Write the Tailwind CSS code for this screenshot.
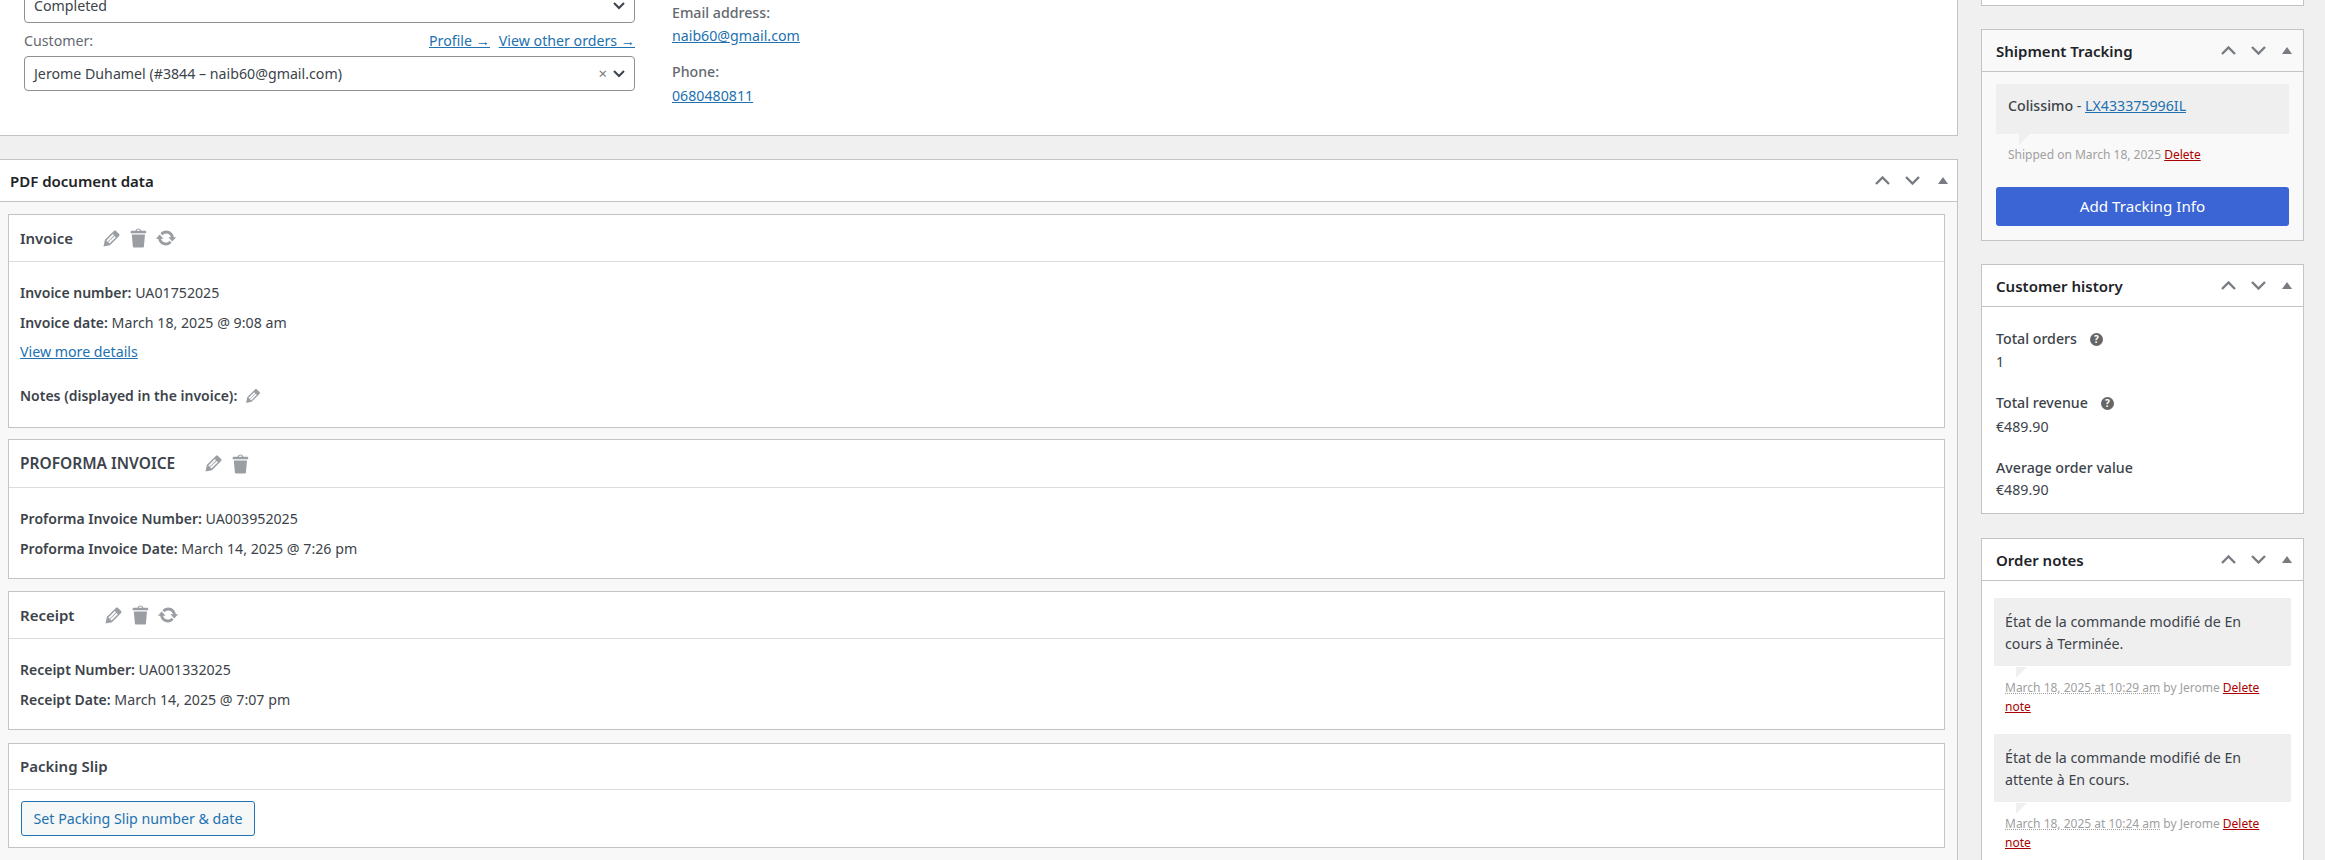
<!DOCTYPE html>
<html lang="en">
<head>
<meta charset="UTF-8">
<title>Edit order</title>
<script src="https://cdn.jsdelivr.net/npm/@tailwindcss/browser@4"></script>
</head>
<body class="bg-[#f0f0f1] h-[860px] overflow-hidden font-['Noto_Sans',sans-serif] text-[14.2px] text-[#3c434a]">
<div class="flex items-start h-[860px] overflow-hidden">

  <!-- Main column -->
  <div class="w-[1958px] shrink-0">
    <!-- Order details -->
    <div class="h-[136px] bg-white border-b border-r border-[#c3c4c7] flex overflow-hidden">
      <div class="w-[611px] ml-[24px] shrink-0 -mt-[12px]">
        <div class="h-[35px] border border-[#8c8f94] rounded-[4px] flex items-center justify-between pl-[9px] pr-[8px] shrink-0">
          <span>Completed</span>
          <svg class="w-[14px] h-[10px]" viewBox="0 0 14 10" fill="none" stroke="#3c434a" stroke-width="2"><path d="M2 2l5 5 5-5"/></svg>
        </div>
        <div class="flex justify-between h-[20px] items-center mt-[8px] text-[#646970]">
          <span>Customer:</span>
          <span class="flex gap-[9px] text-[#2271b1] underline"><a>Profile →</a><a>View other orders →</a></span>
        </div>
        <div class="h-[35px] mt-[5px] border border-[#8c8f94] rounded-[4px] flex items-center justify-between pl-[9px] pr-[8px]">
          <span>Jerome Duhamel (#3844 – naib60@gmail.com)</span>
          <span class="flex items-center gap-[5px]">
            <span class="text-[#777] text-[15px] leading-none">×</span>
            <svg class="w-[14px] h-[10px]" viewBox="0 0 14 10" fill="none" stroke="#3c434a" stroke-width="2"><path d="M2 2l5 5 5-5"/></svg>
          </span>
        </div>
      </div>
      <div class="ml-[37px] pt-[2px] leading-[22px]">
        <div class="text-[#646970] font-medium">Email address:</div>
        <a class="block mt-[1px] text-[#2271b1] underline">naib60@gmail.com</a>
        <div class="mt-[14px] text-[#646970] font-medium">Phone:</div>
        <a class="block mt-[2px] text-[#2271b1] underline">0680480811</a>
      </div>
    </div>

    <!-- PDF document data -->
    <div class="mt-[23px] h-[701px] bg-[#f8f8f8] border-t border-r border-[#c3c4c7]">
      <div class="h-[42px] bg-white border-b border-[#c3c4c7] flex items-center justify-between pl-[10px] pr-[9px]">
        <h2 class="font-semibold text-[15px] text-[#1d2327] pt-[1px]">PDF document data</h2>
        <div class="flex items-center gap-[15px] text-[#787c82]">
          <svg class="w-[15px] h-[9px]" viewBox="0 0 15 9" fill="none" stroke="currentColor" stroke-width="2.4"><path d="M1 8l6.5-6.5L14 8"/></svg>
          <svg class="w-[15px] h-[9px]" viewBox="0 0 15 9" fill="none" stroke="currentColor" stroke-width="2.4"><path d="M1 1l6.5 6.5L14 1"/></svg>
          <svg class="w-[10px] h-[7px] ml-[3px]" viewBox="0 0 10 7" fill="currentColor"><path d="M5 0l5 7H0z"/></svg>
        </div>
      </div>

      <div class="ml-[8px] mr-[12px] mt-[12px]">
        <!-- Invoice -->
        <section class="h-[214px] bg-white border border-[#c3c4c7]">
          <div class="h-[47px] border-b border-[#dcdcde] flex items-center pl-[11px]">
            <h3 class="font-semibold text-[15px]">Invoice</h3>
            <div class="flex items-center ml-[27px] text-[#9a9ea3]">
              <svg class="w-[23px] h-[23px]" viewBox="0 0 20 20" fill="currentColor"><path d="M13.89 3.39l2.71 2.72c.46.46.42 1.24.03 1.64l-8.01 8.02-5.56 1.16 1.16-5.58s7.6-7.63 7.99-8.03c.39-.39 1.22-.39 1.68.07zm-2.73 2.79l-5.59 5.61 1.11 1.11 5.54-5.65zm-2.97 8.23l5.58-5.6-1.07-1.08-5.59 5.6z"/></svg>
              <svg class="w-[24px] h-[24px] ml-[4px]" viewBox="0 0 20 20" fill="currentColor"><path d="M12 4h3c.6 0 1 .4 1 1v1H3V5c0-.6.5-1 1-1h3c.2-1.1 1.3-2 2.5-2s2.3.9 2.5 2zM8 4h3c-.2-.6-.9-1-1.5-1S8.2 3.4 8 4zM4 7h11l-.9 10.1c0 .5-.5.9-1 .9H5.9c-.5 0-.9-.4-1-.9L4 7z"/></svg>
              <svg class="w-[22px] h-[22px] ml-[4px]" viewBox="0 0 20 20" fill="currentColor"><path d="M10.2 3.28c3.53 0 6.43 2.61 6.92 6h2.08l-3.5 4-3.5-4h2.32c-.45-1.97-2.21-3.45-4.32-3.45-1.45 0-2.73.71-3.54 1.78L4.95 5.66C6.23 4.2 8.11 3.28 10.2 3.28zm-.4 13.44c-3.52 0-6.43-2.61-6.92-6H.8l3.5-4c1.17 1.33 2.33 2.67 3.5 4H5.48c.45 1.97 2.21 3.45 4.32 3.45 1.45 0 2.73-.71 3.54-1.78l1.71 1.95c-1.28 1.46-3.15 2.38-5.25 2.38z"/></svg>
            </div>
          </div>
          <div class="pl-[11px] pt-[21px] leading-[20px]">
            <p><b class="font-semibold text-[14px]">Invoice number:</b> UA01752025</p>
            <p class="mt-[10px]"><b class="font-semibold text-[14px]">Invoice date:</b> March 18, 2025 @ 9:08 am</p>
            <a class="block mt-[9px] text-[#2271b1] underline">View more details</a>
            <p class="mt-[24px] flex items-center h-[20px]"><b class="font-semibold text-[14px]">Notes (displayed in the invoice):</b>
              <svg class="w-[20px] h-[20px] ml-[6px] text-[#9a9ea3]" viewBox="0 0 20 20" fill="currentColor"><path d="M13.89 3.39l2.71 2.72c.46.46.42 1.24.03 1.64l-8.01 8.02-5.56 1.16 1.16-5.58s7.6-7.63 7.99-8.03c.39-.39 1.22-.39 1.68.07zm-2.73 2.79l-5.59 5.61 1.11 1.11 5.54-5.65zm-2.97 8.23l5.58-5.6-1.07-1.08-5.59 5.6z"/></svg>
            </p>
          </div>
        </section>

        <!-- Proforma -->
        <section class="h-[140px] mt-[11px] bg-white border border-[#c3c4c7]">
          <div class="h-[48px] border-b border-[#dcdcde] flex items-center pl-[11px]">
            <h3 class="font-semibold text-[15.5px]">PROFORMA INVOICE</h3>
            <div class="flex items-center ml-[27px] text-[#9a9ea3]">
              <svg class="w-[23px] h-[23px]" viewBox="0 0 20 20" fill="currentColor"><path d="M13.89 3.39l2.71 2.72c.46.46.42 1.24.03 1.64l-8.01 8.02-5.56 1.16 1.16-5.58s7.6-7.63 7.99-8.03c.39-.39 1.22-.39 1.68.07zm-2.73 2.79l-5.59 5.61 1.11 1.11 5.54-5.65zm-2.97 8.23l5.58-5.6-1.07-1.08-5.59 5.6z"/></svg>
              <svg class="w-[24px] h-[24px] ml-[4px]" viewBox="0 0 20 20" fill="currentColor"><path d="M12 4h3c.6 0 1 .4 1 1v1H3V5c0-.6.5-1 1-1h3c.2-1.1 1.3-2 2.5-2s2.3.9 2.5 2zM8 4h3c-.2-.6-.9-1-1.5-1S8.2 3.4 8 4zM4 7h11l-.9 10.1c0 .5-.5.9-1 .9H5.9c-.5 0-.9-.4-1-.9L4 7z"/></svg>
            </div>
          </div>
          <div class="pl-[11px] pt-[21px] leading-[20px]">
            <p><b class="font-semibold text-[14px]">Proforma Invoice Number:</b> UA003952025</p>
            <p class="mt-[10px]"><b class="font-semibold text-[14px]">Proforma Invoice Date:</b> March 14, 2025 @ 7:26 pm</p>
          </div>
        </section>

        <!-- Receipt -->
        <section class="h-[139px] mt-[12px] bg-white border border-[#c3c4c7]">
          <div class="h-[47px] border-b border-[#dcdcde] flex items-center pl-[11px]">
            <h3 class="font-semibold text-[15px]">Receipt</h3>
            <div class="flex items-center ml-[28px] text-[#9a9ea3]">
              <svg class="w-[23px] h-[23px]" viewBox="0 0 20 20" fill="currentColor"><path d="M13.89 3.39l2.71 2.72c.46.46.42 1.24.03 1.64l-8.01 8.02-5.56 1.16 1.16-5.58s7.6-7.63 7.99-8.03c.39-.39 1.22-.39 1.68.07zm-2.73 2.79l-5.59 5.61 1.11 1.11 5.54-5.65zm-2.97 8.23l5.58-5.6-1.07-1.08-5.59 5.6z"/></svg>
              <svg class="w-[24px] h-[24px] ml-[4px]" viewBox="0 0 20 20" fill="currentColor"><path d="M12 4h3c.6 0 1 .4 1 1v1H3V5c0-.6.5-1 1-1h3c.2-1.1 1.3-2 2.5-2s2.3.9 2.5 2zM8 4h3c-.2-.6-.9-1-1.5-1S8.2 3.4 8 4zM4 7h11l-.9 10.1c0 .5-.5.9-1 .9H5.9c-.5 0-.9-.4-1-.9L4 7z"/></svg>
              <svg class="w-[22px] h-[22px] ml-[4px]" viewBox="0 0 20 20" fill="currentColor"><path d="M10.2 3.28c3.53 0 6.43 2.61 6.92 6h2.08l-3.5 4-3.5-4h2.32c-.45-1.97-2.21-3.45-4.32-3.45-1.45 0-2.73.71-3.54 1.78L4.95 5.66C6.23 4.2 8.11 3.28 10.2 3.28zm-.4 13.44c-3.52 0-6.43-2.61-6.92-6H.8l3.5-4c1.17 1.33 2.33 2.67 3.5 4H5.48c.45 1.97 2.21 3.45 4.32 3.45 1.45 0 2.73-.71 3.54-1.78l1.71 1.95c-1.28 1.46-3.15 2.38-5.25 2.38z"/></svg>
            </div>
          </div>
          <div class="pl-[11px] pt-[21px] leading-[20px]">
            <p><b class="font-semibold text-[14px]">Receipt Number:</b> UA001332025</p>
            <p class="mt-[10px]"><b class="font-semibold text-[14px]">Receipt Date:</b> March 14, 2025 @ 7:07 pm</p>
          </div>
        </section>

        <!-- Packing slip -->
        <section class="h-[105px] mt-[13px] bg-white border border-[#c3c4c7]">
          <div class="h-[46px] border-b border-[#dcdcde] flex items-center pl-[11px]">
            <h3 class="font-semibold text-[15px]">Packing Slip</h3>
          </div>
          <div class="pl-[12px] pt-[11px]">
            <button class="h-[35px] w-[234px] border border-[#2271b1] rounded-[3px] bg-[#f6f7f7] text-[#2271b1]">Set Packing Slip number &amp; date</button>
          </div>
        </section>
      </div>
    </div>
  </div>

  <!-- Sidebar -->
  <aside class="w-[323px] ml-[23px] shrink-0 flex flex-col gap-[23px]">
    <div class="h-[6px] bg-white border-b border-x border-[#c3c4c7]"></div>

    <div class="h-[212px] bg-[#f9f9f9] border border-[#c3c4c7]">
      <div class="h-[42px] border-b border-[#c3c4c7] flex items-center justify-between pl-[14px] pr-[11px]">
        <h2 class="font-semibold text-[15px] text-[#1d2327] pt-[2px]">Shipment Tracking</h2>
        <div class="flex items-center gap-[15px] text-[#787c82]">
          <svg class="w-[15px] h-[9px]" viewBox="0 0 15 9" fill="none" stroke="currentColor" stroke-width="2.4"><path d="M1 8l6.5-6.5L14 8"/></svg>
          <svg class="w-[15px] h-[9px]" viewBox="0 0 15 9" fill="none" stroke="currentColor" stroke-width="2.4"><path d="M1 1l6.5 6.5L14 1"/></svg>
          <svg class="w-[10px] h-[7px] ml-[1px]" viewBox="0 0 10 7" fill="currentColor"><path d="M5 0l5 7H0z"/></svg>
        </div>
      </div>
      <div class="mx-[14px] mt-[12px]">
        <div class="relative h-[50px] bg-[#efefef] pl-[12px] pt-[12px] leading-[20px]">
          <b class="font-medium">Colissimo</b> - <a class="text-[#2271b1] underline">LX433375996IL</a>
          <span class="absolute left-[23px] top-[50px] w-[11px] h-[11px] bg-[#efefef] [clip-path:polygon(0_0,100%_0,0_100%)]"></span>
        </div>
        <p class="pl-[12px] mt-[11px] leading-[20px] text-[12px] text-[#a0a0a0]">Shipped on March 18, 2025 <a class="text-[#a00] underline">Delete</a></p>
        <button class="mt-[22px] w-full h-[39px] rounded-[3px] bg-[#3b64d4] text-white text-[15.2px]">Add Tracking Info</button>
      </div>
    </div>

    <div class="h-[250px] bg-white border border-[#c3c4c7]">
      <div class="h-[42px] border-b border-[#c3c4c7] flex items-center justify-between pl-[14px] pr-[11px]">
        <h2 class="font-semibold text-[15px] text-[#1d2327] pt-[2px]">Customer history</h2>
        <div class="flex items-center gap-[15px] text-[#787c82]">
          <svg class="w-[15px] h-[9px]" viewBox="0 0 15 9" fill="none" stroke="currentColor" stroke-width="2.4"><path d="M1 8l6.5-6.5L14 8"/></svg>
          <svg class="w-[15px] h-[9px]" viewBox="0 0 15 9" fill="none" stroke="currentColor" stroke-width="2.4"><path d="M1 1l6.5 6.5L14 1"/></svg>
          <svg class="w-[10px] h-[7px] ml-[1px]" viewBox="0 0 10 7" fill="currentColor"><path d="M5 0l5 7H0z"/></svg>
        </div>
      </div>
      <div class="pl-[14px] pt-[21px] leading-[22px]">
        <div class="font-medium flex items-center">Total orders
          <span class="ml-[13px] w-[13px] h-[13px] rounded-full bg-[#666] text-white text-[10px] font-bold leading-[13px] text-center">?</span>
        </div>
        <div class="mt-[1px]">1</div>
        <div class="mt-[19px] font-medium flex items-center">Total revenue
          <span class="ml-[13px] w-[13px] h-[13px] rounded-full bg-[#666] text-white text-[10px] font-bold leading-[13px] text-center">?</span>
        </div>
        <div class="mt-[2px]">€489.90</div>
        <div class="mt-[19px] font-medium">Average order value</div>
        <div>€489.90</div>
      </div>
    </div>

    <div class="h-[330px] mt-[1px] bg-white border-t border-x border-[#c3c4c7]">
      <div class="h-[42px] border-b border-[#c3c4c7] flex items-center justify-between pl-[14px] pr-[11px]">
        <h2 class="font-semibold text-[15px] text-[#1d2327] pt-[1px]">Order notes</h2>
        <div class="flex items-center gap-[15px] text-[#787c82]">
          <svg class="w-[15px] h-[9px]" viewBox="0 0 15 9" fill="none" stroke="currentColor" stroke-width="2.4"><path d="M1 8l6.5-6.5L14 8"/></svg>
          <svg class="w-[15px] h-[9px]" viewBox="0 0 15 9" fill="none" stroke="currentColor" stroke-width="2.4"><path d="M1 1l6.5 6.5L14 1"/></svg>
          <svg class="w-[10px] h-[7px] ml-[1px]" viewBox="0 0 10 7" fill="currentColor"><path d="M5 0l5 7H0z"/></svg>
        </div>
      </div>
      <div class="mx-[12px] mt-[17px]">
        <div class="relative h-[68px] bg-[#efefef] pl-[11px] pr-[40px] pt-[13px] leading-[22px]">État de la commande modifié de En cours à Terminée.
          <span class="absolute left-[22px] top-[69px] w-[11px] h-[11px] bg-[#efefef] [clip-path:polygon(0_0,100%_0,0_100%)]"></span>
        </div>
        <p class="pl-[11px] pr-[8px] mt-[12px] text-[12px] leading-[19px] text-[#a0a0a0]"><span class="underline decoration-dotted">March 18, 2025 at 10:29 am</span> by Jerome <a class="text-[#a00] underline">Delete</a><br><a class="text-[#a00] underline">note</a></p>
        <div class="relative h-[68px] mt-[18px] bg-[#efefef] pl-[11px] pr-[40px] pt-[13px] leading-[22px]">État de la commande modifié de En attente à En cours.
          <span class="absolute left-[22px] top-[69px] w-[11px] h-[11px] bg-[#efefef] [clip-path:polygon(0_0,100%_0,0_100%)]"></span>
        </div>
        <p class="pl-[11px] pr-[8px] mt-[12px] text-[12px] leading-[19px] text-[#a0a0a0]"><span class="underline decoration-dotted">March 18, 2025 at 10:24 am</span> by Jerome <a class="text-[#a00] underline">Delete</a><br><a class="text-[#a00] underline">note</a></p>
      </div>
    </div>
  </aside>
</div>
</body>
</html>
